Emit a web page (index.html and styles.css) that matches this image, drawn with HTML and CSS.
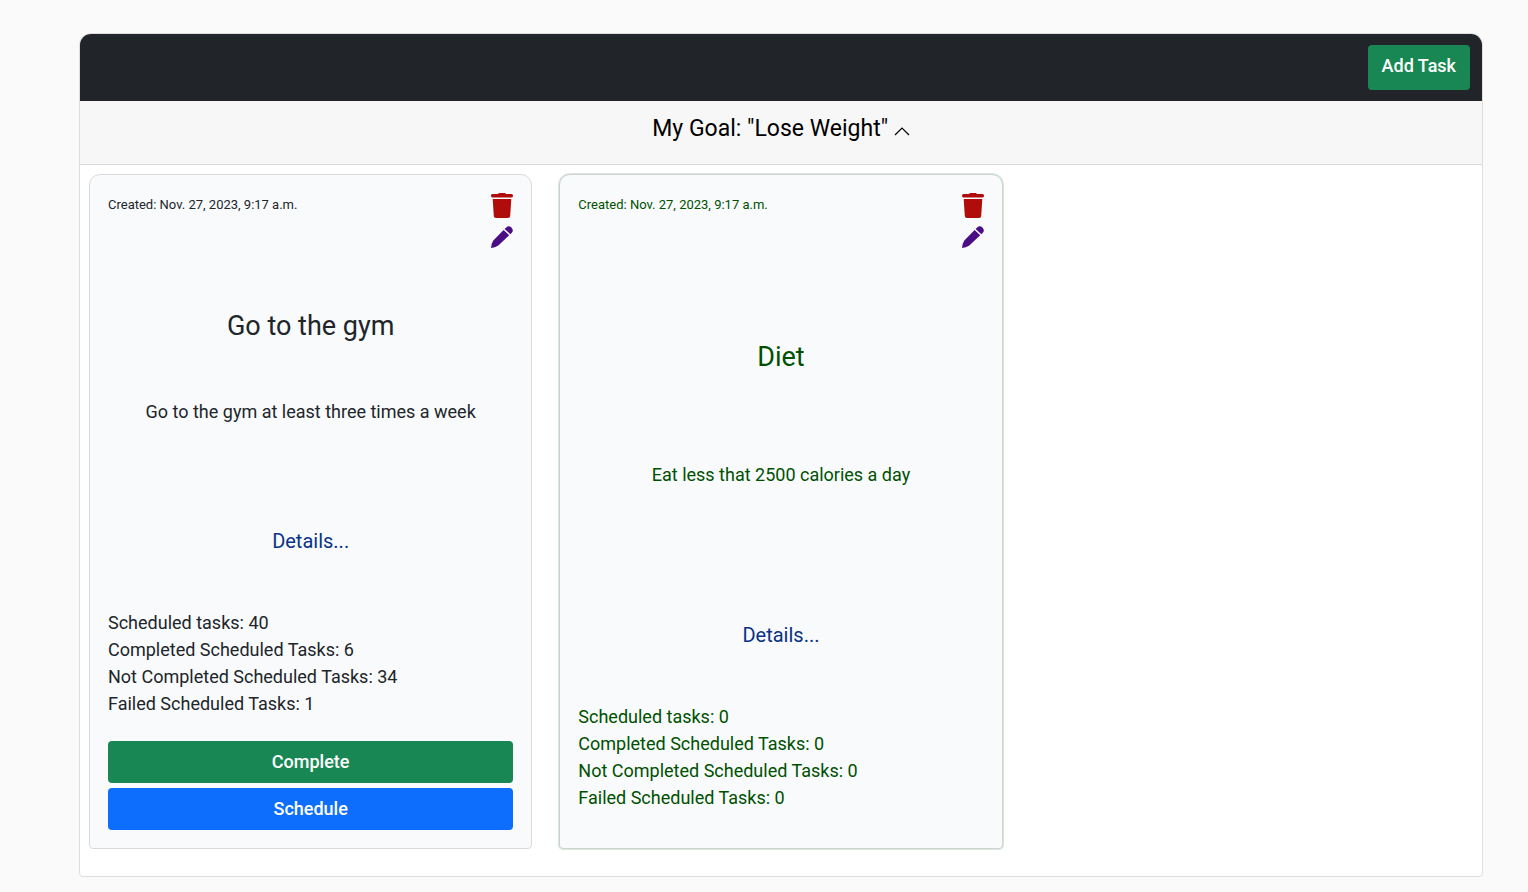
FILE: index.html
```
<!DOCTYPE html>
<html lang="en">
<head>
<meta charset="utf-8">
<meta name="viewport" content="width=device-width, initial-scale=1">
<title>My Goal</title>
<link rel="stylesheet" href="styles.css">
</head>
<body>
<svg class="sprite" aria-hidden="true">
  <symbol id="trash" viewBox="0 0 22 25">
    <path d="M8.300 0h5.400q.9 0 1.100 1.100h5.700q1.500.1 1.500 1.500v.5q0 1.300-1.400 1.300H1.400Q0 4.400 0 3.100v-.5q0-1.400 1.500-1.500h5.700Q7.400 0 8.300 0zM1.700 6h18.600l-1.100 17q-.2 2-2.200 2H5q-2 0-2.200-2z"/>
  </symbol>
  <symbol id="pencil" viewBox="0 0 22 22">
    <path d="M15.200 1.400q2.700-2.400 5.200.2t.6 4.900l-1.600 1.700-5.800-5.300zM12.600 4l5.600 5.300L7.300 19.600Q4 21.800 0 22q0-4 2.300-7.600z"/>
  </symbol>
</svg>
<main class="board">
  <header class="board-bar">
    <button class="btn btn-add" type="button">Add Task</button>
  </header>
  <h1 class="goal">
    <button class="goal-toggle" type="button" aria-expanded="true">My Goal: "Lose Weight"
      <svg class="chevron" viewBox="0 0 16 9" aria-hidden="true"><path d="M1 8l7-7 7 7"/></svg>
    </button>
  </h1>
  <section class="tasks">
    <article class="task">
      <div class="task-body">
        <div class="task-head">
          <span class="created">Created: Nov. 27, 2023, 9:17 a.m.</span>
          <div class="actions">
            <button class="icon-btn delete" type="button" aria-label="Delete task"><svg class="icon-trash"><use href="#trash"/></svg></button>
            <button class="icon-btn edit" type="button" aria-label="Edit task"><svg class="icon-pencil"><use href="#pencil"/></svg></button>
          </div>
        </div>
        <h2 class="title">Go to the gym</h2>
        <p class="description">Go to the gym at least three times a week</p>
        <a class="details" href="#">Details...</a>
      </div>
      <ul class="stats">
        <li>Scheduled tasks: 40</li>
        <li>Completed Scheduled Tasks: 6</li>
        <li>Not Completed Scheduled Tasks: 34</li>
        <li>Failed Scheduled Tasks: 1</li>
      </ul>
      <div class="task-buttons">
        <button class="btn btn-complete" type="button">Complete</button>
        <button class="btn btn-schedule" type="button">Schedule</button>
      </div>
    </article>
    <article class="task task-done">
      <div class="task-body">
        <div class="task-head">
          <span class="created">Created: Nov. 27, 2023, 9:17 a.m.</span>
          <div class="actions">
            <button class="icon-btn delete" type="button" aria-label="Delete task"><svg class="icon-trash"><use href="#trash"/></svg></button>
            <button class="icon-btn edit" type="button" aria-label="Edit task"><svg class="icon-pencil"><use href="#pencil"/></svg></button>
          </div>
        </div>
        <h2 class="title">Diet</h2>
        <p class="description">Eat less that 2500 calories a day</p>
        <a class="details" href="#">Details...</a>
      </div>
      <ul class="stats">
        <li>Scheduled tasks: 0</li>
        <li>Completed Scheduled Tasks: 0</li>
        <li>Not Completed Scheduled Tasks: 0</li>
        <li>Failed Scheduled Tasks: 0</li>
      </ul>
    </article>
  </section>
</main>
</body>
</html>
```
FILE: styles.css
```
* {
  box-sizing: border-box;
}

body {
  margin: 0;
  padding: 33px 45px 15px 79px;
  background: #fafafa;
  color: #212529;
  font: 18px/27px Roboto, sans-serif;
}

h1, h2, p, ul {
  margin: 0;
  padding: 0;
  font-weight: 400;
}

button {
  margin: 0;
  border: 0;
  font: inherit;
  cursor: pointer;
}

.sprite {
  display: none;
}

.board {
  overflow: hidden;
  background: #fff;
  border: 1px solid #dcddde;
  border-radius: 12px 12px 4px 4px;
}

.board-bar {
  display: flex;
  justify-content: flex-end;
  padding: 11px 12px;
  background: #212529;
}

.btn {
  padding: 7px 14px 8px;
  border-radius: 4px;
  color: #fff;
  font-weight: 500;
}

.btn-add {
  padding: 7px 14px 11px;
  background: #198754;
}

.goal {
  padding: 10px 18px 17px;
  background: #f7f7f7;
  border-bottom: 1px solid #d8d9da;
  text-align: center;
}

.goal-toggle {
  padding: 0;
  background: none;
  color: #000;
  font-size: 23px;
  line-height: 36px;
}

.chevron {
  width: 16px;
  height: 9px;
  fill: none;
  stroke: #000;
  stroke-width: 1.2;
}

.tasks {
  display: grid;
  grid-template-columns: repeat(3, minmax(0, 1fr));
  gap: 27px;
  padding: 9px 9px 27px;
}

.task {
  display: flex;
  flex-direction: column;
  min-height: 675px;
  padding: 18px;
  background: #f8fafc;
  border: 1px solid #d8dadd;
  border-radius: 11px 11px 4px 4px;
}

.task-done {
  padding-bottom: 37px;
  border-color: #cbd5ce;
  box-shadow: 0 0 0 1px #dce5de;
  color: #005000;
}

.task-body {
  display: flex;
  flex: 1;
  flex-direction: column;
  align-items: center;
  justify-content: space-between;
  text-align: center;
}

.task-head {
  display: flex;
  justify-content: space-between;
  align-self: stretch;
  min-height: 61px;
}

.created {
  font-size: 13px;
  line-height: 24px;
}

.actions {
  display: flex;
  flex-direction: column;
  gap: 8px;
}

.icon-btn {
  display: flex;
  padding: 0;
  background: none;
}

.icon-btn svg {
  width: 22px;
  fill: currentColor;
}

.icon-trash {
  height: 25px;
}

.icon-pencil {
  height: 22px;
}

.delete {
  color: #b00c0c;
}

.edit {
  color: #4b0d86;
}

.title {
  font-size: 27px;
  line-height: 32px;
}

.description {
  margin-bottom: 45px;
}

.details {
  margin-bottom: 53px;
  color: #0b3284;
  font-size: 20px;
  line-height: 30px;
  text-decoration: none;
}

.stats {
  list-style: none;
}

.task-buttons {
  display: grid;
  gap: 5px;
  margin-top: 24px;
}

.btn-complete {
  background: #198754;
}

.btn-schedule {
  background: #0d6efd;
}
```
